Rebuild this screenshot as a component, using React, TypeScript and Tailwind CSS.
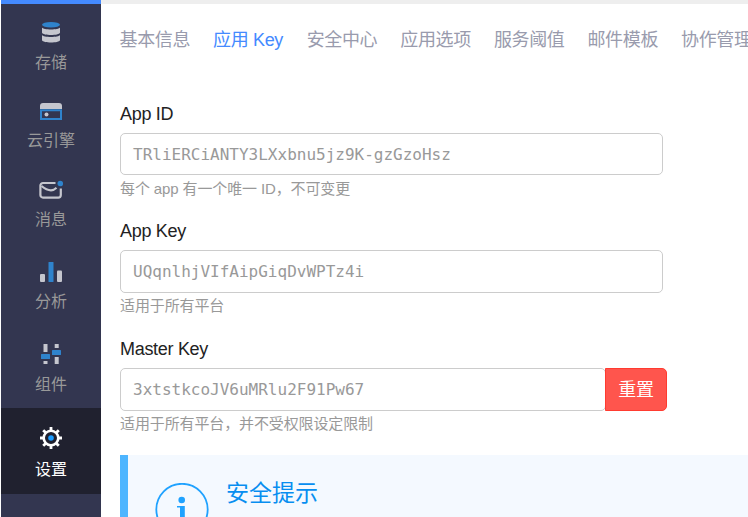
import type { ReactNode } from 'react';

const StorageIcon = () => (
  <svg width="24" height="24" viewBox="0 0 24 24">
    <path d="M3 7.500c1 2.600 17 2.600 18 0v5.200c-1 3-17 3-18 0zM3 15c1 2.600 17 2.600 18 0v5.200c-1 3-17 3-18 0z" fill="#c5c6ce" />
    <ellipse cx="12" cy="4.700" rx="9" ry="2.800" fill="#2f83cc" />
  </svg>
);

const EngineIcon = () => (
  <svg width="24" height="24" viewBox="0 0 24 24">
    <path d="M1 10V7a3 3 0 0 1 3-3h16a3 3 0 0 1 3 3v3z" fill="#c5c6ce" />
    <path d="M2 11.200h20v8.800H2z" fill="none" stroke="#2f83cc" strokeWidth="2" />
    <circle cx="7.500" cy="15.500" r="2" fill="#c5c6ce" />
  </svg>
);

const MessageIcon = () => (
  <svg width="24" height="24" viewBox="0 0 24 24">
    <path d="M16.500 5H4a2.600 2.600 0 0 0-2.600 2.600V17A2.600 2.600 0 0 0 4 19.600h15.200a2.600 2.600 0 0 0 2.600-2.600V10.500" fill="none" stroke="#c5c6ce" strokeWidth="2.200" />
    <path d="M2.500 8c3 2.500 6 4.300 9.500 4.300 2 0 4-1 5.500-2.500" fill="none" stroke="#c5c6ce" strokeWidth="2.200" />
    <circle cx="21.300" cy="5.500" r="2.800" fill="#2f83cc" />
  </svg>
);

const AnalyticsIcon = () => (
  <svg width="24" height="24" viewBox="0 0 24 24">
    <rect x="1" y="14" width="5" height="8" rx="1" fill="#c5c6ce" />
    <rect x="9.500" y="2" width="5" height="20" rx="0.500" fill="#2f83cc" />
    <rect x="18" y="10.500" width="5" height="11.500" rx="1" fill="#c5c6ce" />
  </svg>
);

const ComponentsIcon = () => (
  <svg width="24" height="24" viewBox="0 0 24 24">
    <path d="M4.500 2h4v8h-4zM4.500 19h4v3h-4zM15.700 2h4v4h-4zM15.700 15h4v7h-4z" fill="#c5c6ce" />
    <rect x="2" y="12" width="9" height="5" rx="0.500" fill="#2f83cc" />
    <rect x="13" y="8" width="9" height="5" rx="0.500" fill="#2f83cc" />
  </svg>
);

const SettingsIcon = () => (
  <svg width="24" height="24" viewBox="0 0 24 24">
    <circle cx="12" cy="12" r="7.300" fill="none" stroke="#fff" strokeWidth="2.600" />
    <path d="M12 1v3.500M12 19.500V23M1 12h3.500M19.500 12H23M4.200 4.200l2.400 2.400M17.400 17.400l2.400 2.400M4.200 19.800l2.400-2.400M17.400 6.600l2.400-2.400" stroke="#fff" strokeWidth="2.800" />
    <circle cx="12" cy="12" r="2.800" fill="#1b9cff" />
  </svg>
);

type NavItemProps = { label: string; className: string; children: ReactNode };

const NavItem = ({ label, className, children }: NavItemProps) => (
  <li className={`flex flex-col items-center ${className}`}>
    {children}
    <span className="text-base leading-6">{label}</span>
  </li>
);

const tabs = ['基本信息', '应用 Key', '安全中心', '应用选项', '服务阈值', '邮件模板', '协作管理'];

type FieldProps = { label: string; value: string; hint: string; className: string; boxClass: string; action?: string };

const Field = ({ label, value, hint, className, boxClass, action }: FieldProps) => (
  <section className={className}>
    <h2 className="text-lg leading-6 tracking-[-0.3px] text-[#222]">{label}</h2>
    <div className="mt-[7px] flex">
      <div
        className={`flex items-center rounded-[5px] border border-[#ccc] pl-3 font-['DejaVu_Sans_Mono',monospace] text-base text-[#999] ${boxClass}`}
      >
        {value}
      </div>
      {action && (
        <button className="-ml-px h-[43px] w-[62px] rounded-r-[5px] border border-[#ff3b30] bg-[#ff554d] text-lg tracking-[-0.36px] text-white">
          {action}
        </button>
      )}
    </div>
    <p className="mt-px text-[15px] leading-6 tracking-[-0.12px] text-[#999]">{hint}</p>
  </section>
);

export default function App() {
  return (
    <div className="flex h-[517px] w-[748px] overflow-hidden bg-white pl-px font-['Liberation_Sans','Noto_Sans_CJK_SC',sans-serif]">
      <aside className="w-[100px] shrink-0 border-t-4 border-[#448aff] bg-[#333650] text-[#999]">
        <ul>
          <NavItem label="存储" className="gap-[7px] pt-4">
            <StorageIcon />
          </NavItem>
          <NavItem label="云引擎" className="gap-[6px] pt-6">
            <EngineIcon />
          </NavItem>
          <NavItem label="消息" className="gap-[6px] pt-[25px]">
            <MessageIcon />
          </NavItem>
          <NavItem label="分析" className="gap-[6px] pt-7">
            <AnalyticsIcon />
          </NavItem>
          <NavItem label="组件" className="gap-[7px] pt-7 pb-[11px]">
            <ComponentsIcon />
          </NavItem>
          <NavItem label="设置" className="h-[86px] gap-2 bg-[#20212f] pt-[18px] text-white">
            <SettingsIcon />
          </NavItem>
        </ul>
      </aside>
      <main className="min-w-0 flex-1 border-t-4 border-[#eee] pl-[19px]">
        <nav className="-ml-[0.5px] mt-6 flex h-6 text-lg leading-6 tracking-[-0.36px] whitespace-nowrap text-[#999bad]">
          {tabs.map((tab, i) => (
            <a key={tab} className={`w-[93.6px] shrink-0 ${i === 1 ? 'text-[#448aff]' : ''}`}>
              {tab}
            </a>
          ))}
        </nav>
        <Field className="mt-[50px] h-[117px]" boxClass="mb-px h-[42px] w-[543px] pt-px" label="App ID" value="TRliERCiANTY3LXxbnu5jz9K-gzGzoHsz" hint="每个 app 有一个唯一 ID，不可变更" />
        <Field className="h-[118px]" boxClass="h-[43px] w-[543px]" label="App Key" value="UQqnlhjVIfAipGiqDvWPTz4i" hint="适用于所有平台" />
        <Field className="h-[118px]" boxClass="h-[43px] w-[486px]" label="Master Key" value="3xtstkcoJV6uMRlu2F91Pw67" hint="适用于所有平台，并不受权限设定限制" action="重置" />
        <div className="flex h-[100px] border-l-8 border-[#4db5ff] bg-[#f4f9ff]">
          <svg className="mt-7 ml-[27px] shrink-0" width="54" height="54" viewBox="0 0 54 54">
            <circle cx="27" cy="26.500" r="25.700" fill="none" stroke="#1fa2ff" strokeWidth="1.800" />
            <circle cx="26.700" cy="17" r="3.300" fill="#1fa2ff" />
            <path d="M22 23h7.800v16H33v1.800H22V39h3V24.600h-3z" fill="#1fa2ff" />
          </svg>
          <h3 className="mt-[22px] ml-[17px] text-[23px] leading-8 text-[#078ef0]">安全提示</h3>
        </div>
      </main>
    </div>
  );
}
